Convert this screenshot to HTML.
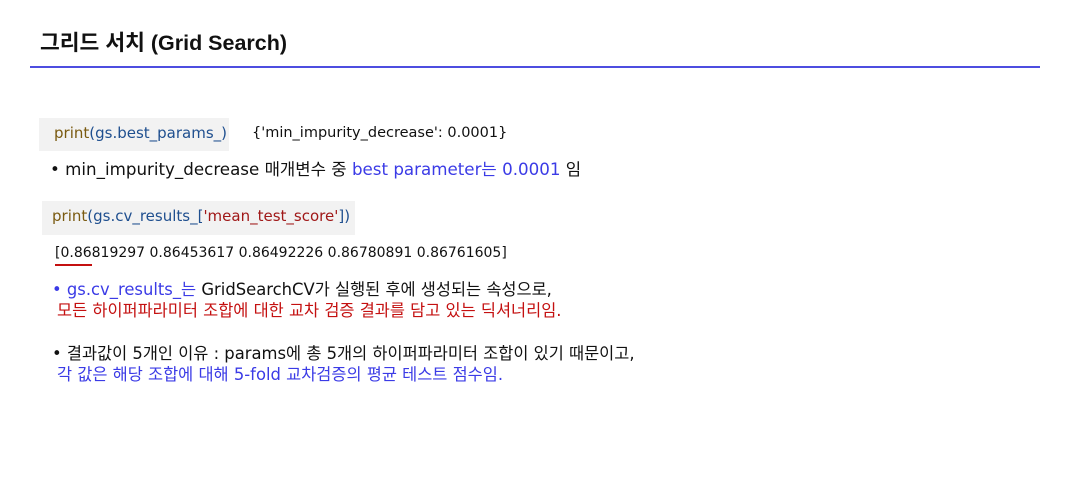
<!DOCTYPE html><html><head><meta charset="utf-8"><style>
body{margin:0;width:1089px;height:485px;background:#fff;position:relative;overflow:hidden;font-family:"DejaVu Sans","Noto Sans CJK KR",sans-serif;color:#111}
.a{position:absolute;white-space:nowrap;line-height:1}
.b{color:#3b3be6}.r{color:#c41010}
</style></head><body>
<div class="a" style="left:40px;top:33px;font-size:21.5px;font-weight:bold;font-family:'Liberation Sans','Noto Sans CJK KR',sans-serif">그리드 서치 (Grid Search)</div>
<div class="a" style="left:30px;top:66px;width:1010px;height:2px;background:#4d4de0"></div>
<div class="a" style="left:39px;top:118px;width:190px;height:33px;background:#f2f2f2"></div>
<div class="a" style="left:54px;top:126px;font-size:15px"><span style="color:#7a5a10">print</span><span style="color:#1f4f8f">(gs.best_params_)</span></div>
<div class="a" style="left:252px;top:126px;font-size:14.5px">{'min_impurity_decrease': 0.0001}</div>
<div class="a" style="left:50px;top:161px;font-size:16.7px">• min_impurity_decrease 매개변수 중 <span class="b">best parameter는 0.0001</span> 임</div>
<div class="a" style="left:42px;top:201px;width:313px;height:34px;background:#f2f2f2"></div>
<div class="a" style="left:52px;top:209px;font-size:15px"><span style="color:#7a5a10">print</span><span style="color:#1f4f8f">(gs.cv_results_[</span><span style="color:#a01818">'mean_test_score'</span><span style="color:#1f4f8f">])</span></div>
<div class="a" style="left:55px;top:246px;font-size:14px">[0.86819297 0.86453617 0.86492226 0.86780891 0.86761605]</div>
<div class="a" style="left:55px;top:264px;width:37px;height:2px;background:#c41010"></div>
<div class="a" style="left:52px;top:282px;font-size:16.4px"><span class="b">• gs.cv_results_는</span> GridSearchCV가 실행된 후에 생성되는 속성으로,</div>
<div class="a r" style="left:57px;top:303px;font-size:16.4px">모든 하이퍼파라미터 조합에 대한 교차 검증 결과를 담고 있는 딕셔너리임.</div>
<div class="a" style="left:52px;top:346px;font-size:16.4px">• 결과값이 5개인 이유 : params에 총 5개의 하이퍼파라미터 조합이 있기 때문이고,</div>
<div class="a b" style="left:57px;top:367px;font-size:16.4px">각 값은 해당 조합에 대해 5-fold 교차검증의 평균 테스트 점수임.</div>
</body></html>
